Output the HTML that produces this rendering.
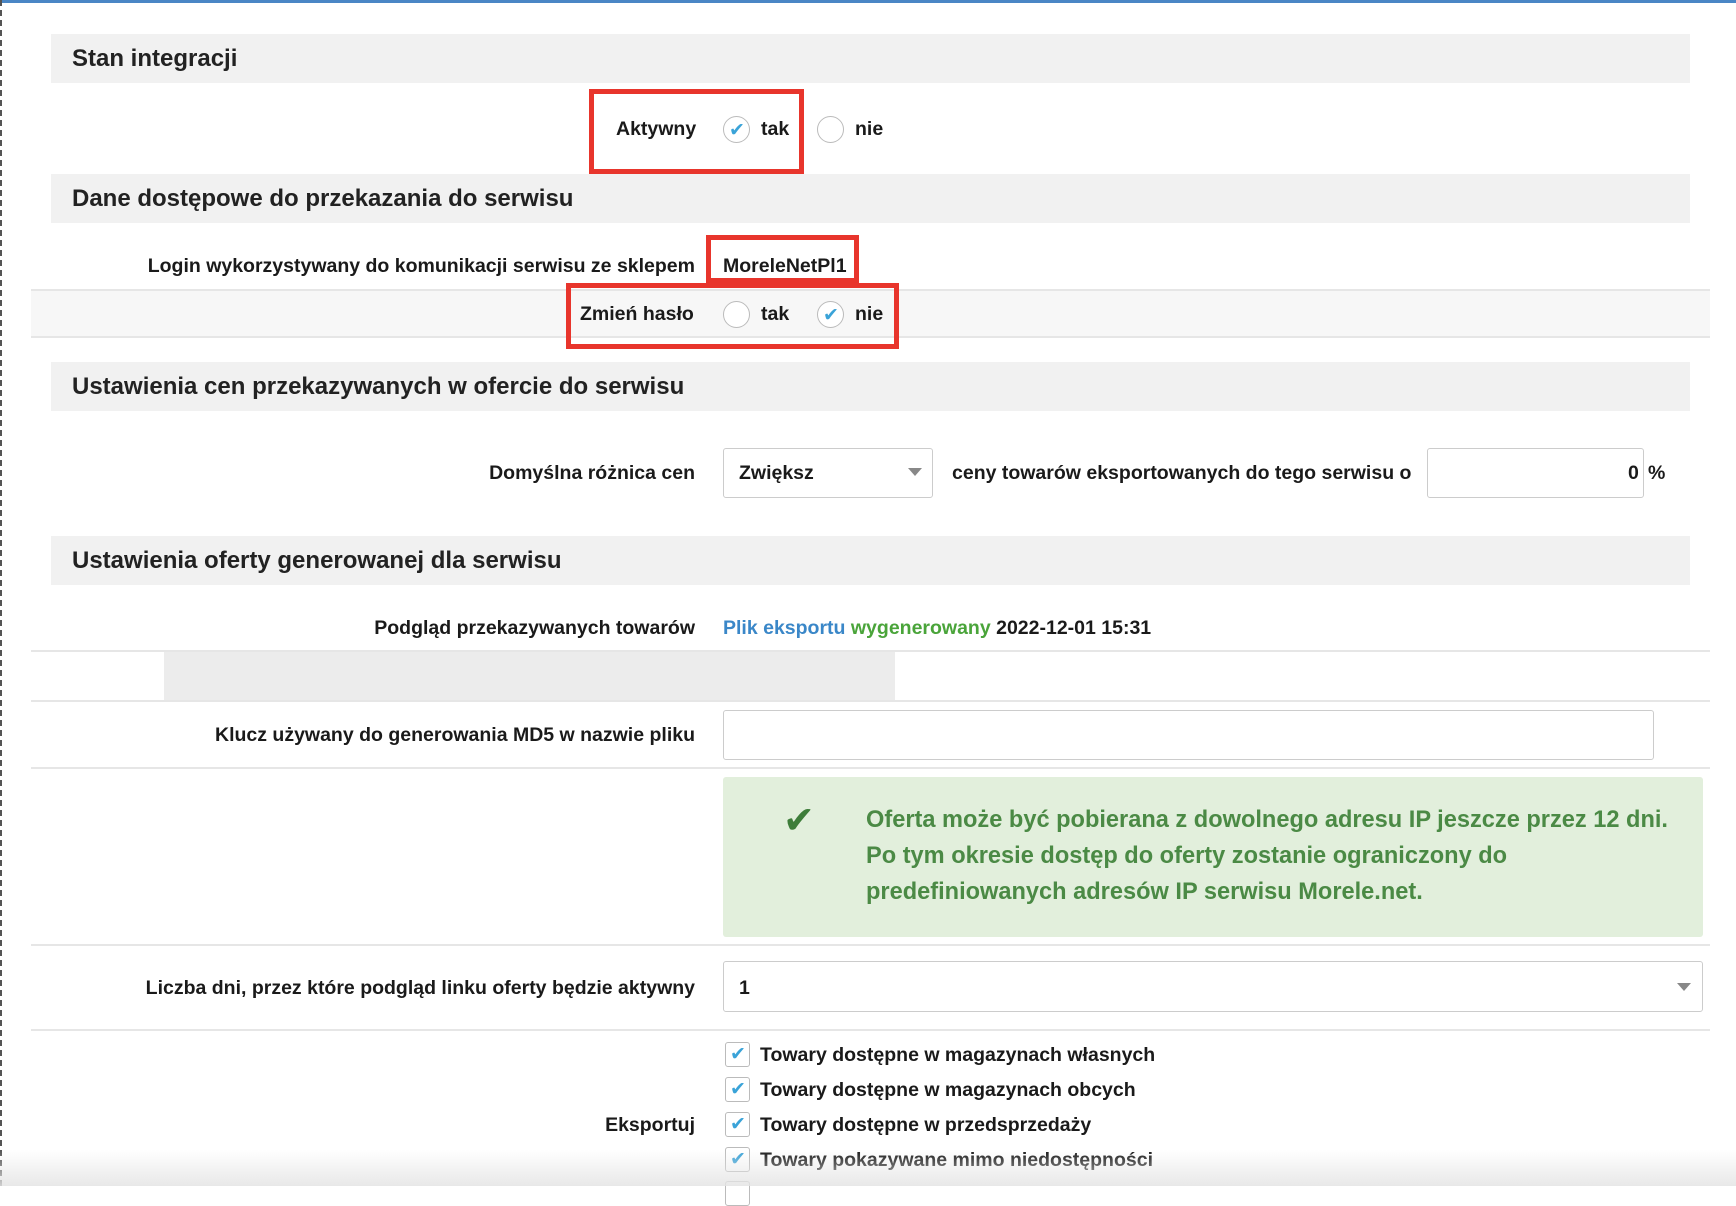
<!DOCTYPE html>
<html><head><meta charset="utf-8"><style>
*{margin:0;padding:0;box-sizing:border-box}
body{width:1736px;height:1186px;overflow:hidden;background:#fff;font-family:"Liberation Sans",sans-serif;color:#222;position:relative}
.a{position:absolute}
.hd{position:absolute;left:51px;width:1639px;height:49px;background:#f1f1f1;font-size:24px;font-weight:bold;padding-left:21px;line-height:49px;color:#222}
.t{position:absolute;font-size:19.5px;font-weight:bold;white-space:nowrap;line-height:24px;color:#1a1a1a}
.r{text-align:right;right:1041px}
.line{position:absolute;left:31px;width:1679px;height:2px;background:#e6e6e6}
.red{position:absolute;border:5px solid #e8352c}
.rad{position:absolute;width:27px;height:27px;border:1.5px solid #bbb;border-radius:50%;background:#fff}
.box{position:absolute;border:1.5px solid #ccc;border-radius:3px;background:#fff}
.cb{position:absolute;left:725px;width:25px;height:25px;border:1.5px solid #bbb;border-radius:3px;background:#fff}
.ck{color:#3aa3d8;font-size:19px;position:absolute;left:4px;top:0px}
</style></head><body>
<div class="a" style="left:0;top:0;width:1736px;height:3px;background:#4a86c5"></div>
<div class="a" style="left:0;top:0;width:3px;height:1186px;border-left:2px dashed #555"></div>

<div class="hd" style="top:34px">Stan integracji</div>
<div class="t" style="left:616px;top:117px">Aktywny</div>
<div class="rad" style="left:723px;top:116px"><span class="ck" style="left:5px;top:2px">✔</span></div>
<div class="t" style="left:761px;top:117px">tak</div>
<div class="rad" style="left:817px;top:116px"></div>
<div class="t" style="left:855px;top:117px">nie</div>
<div class="red" style="left:589px;top:89px;width:215px;height:85px"></div>

<div class="hd" style="top:174px">Dane dostępowe do przekazania do serwisu</div>
<div class="t r" style="top:254px">Login wykorzystywany do komunikacji serwisu ze sklepem</div>
<div class="t" style="left:723px;top:254px">MoreleNetPl1</div>
<div class="red" style="left:706px;top:235px;width:153px;height:48px"></div>

<div class="a" style="left:31px;top:289px;width:1679px;height:49px;background:#f7f7f7;border-top:2px solid #e6e6e6;border-bottom:2px solid #e6e6e6"></div>
<div class="t" style="left:580px;top:302px">Zmień hasło</div>
<div class="rad" style="left:723px;top:301px"></div>
<div class="t" style="left:761px;top:302px">tak</div>
<div class="rad" style="left:817px;top:301px"><span class="ck" style="left:5px;top:2px">✔</span></div>
<div class="t" style="left:855px;top:302px">nie</div>
<div class="red" style="left:566px;top:283px;width:333px;height:66px"></div>

<div class="hd" style="top:362px">Ustawienia cen przekazywanych w ofercie do serwisu</div>
<div class="t r" style="top:461px">Domyślna różnica cen</div>
<div class="box" style="left:723px;top:448px;width:210px;height:50px"></div>
<div class="t" style="left:739px;top:461px">Zwiększ</div>
<div class="a" style="left:908px;top:468px;border-left:7px solid transparent;border-right:7px solid transparent;border-top:8px solid #888"></div>
<div class="t" style="left:952px;top:461px">ceny towarów eksportowanych do tego serwisu o</div>
<div class="box" style="left:1427px;top:448px;width:217px;height:50px"></div>
<div class="t" style="left:1628px;top:461px">0</div>
<div class="t" style="left:1648px;top:461px">%</div>

<div class="hd" style="top:536px">Ustawienia oferty generowanej dla serwisu</div>
<div class="t r" style="top:616px">Podgląd przekazywanych towarów</div>
<div class="t" style="left:723px;top:616px"><span style="color:#3a87c8">Plik eksportu</span> <span style="color:#4aa43a">wygenerowany</span> 2022-12-01 15:31</div>
<div class="line" style="top:650px"></div>
<div class="a" style="left:164px;top:652px;width:731px;height:48px;background:#ececec"></div>
<div class="line" style="top:700px"></div>
<div class="t r" style="top:723px">Klucz używany do generowania MD5 w nazwie pliku</div>
<div class="box" style="left:723px;top:710px;width:931px;height:50px"></div>
<div class="line" style="top:767px"></div>
<div class="a" style="left:723px;top:777px;width:980px;height:160px;background:#e2efdc;border-radius:3px"></div>
<div class="a" style="left:783px;top:798px;font-size:38px;color:#3e7d3a">✔</div>
<div class="a" style="left:866px;top:802px;font-size:23.6px;font-weight:bold;line-height:36px;color:#4b8a45">Oferta może być pobierana z dowolnego adresu IP jeszcze przez 12 dni.<br>Po tym okresie dostęp do oferty zostanie ograniczony do<br>predefiniowanych adresów IP serwisu Morele.net.</div>
<div class="line" style="top:944px"></div>
<div class="t r" style="top:976px">Liczba dni, przez które podgląd linku oferty będzie aktywny</div>
<div class="box" style="left:723px;top:961px;width:980px;height:51px"></div>
<div class="t" style="left:739px;top:976px">1</div>
<div class="a" style="left:1677px;top:983px;border-left:7px solid transparent;border-right:7px solid transparent;border-top:8px solid #888"></div>
<div class="line" style="top:1029px"></div>

<div class="cb" style="top:1042px"><span class="ck">✔</span></div>
<div class="t" style="left:760px;top:1043px">Towary dostępne w magazynach własnych</div>
<div class="cb" style="top:1077px"><span class="ck">✔</span></div>
<div class="t" style="left:760px;top:1078px">Towary dostępne w magazynach obcych</div>
<div class="cb" style="top:1112px"><span class="ck">✔</span></div>
<div class="t" style="left:760px;top:1113px">Towary dostępne w przedsprzedaży</div>
<div class="t r" style="top:1113px">Eksportuj</div>
<div class="cb" style="top:1147px"><span class="ck">✔</span></div>
<div class="t" style="left:760px;top:1148px">Towary pokazywane mimo niedostępności</div>
<div class="cb" style="top:1181px"></div>
<div class="a" style="left:0;top:1150px;width:1736px;height:36px;background:linear-gradient(rgba(235,235,235,0),rgba(228,228,228,0.85))"></div>
</body></html>
